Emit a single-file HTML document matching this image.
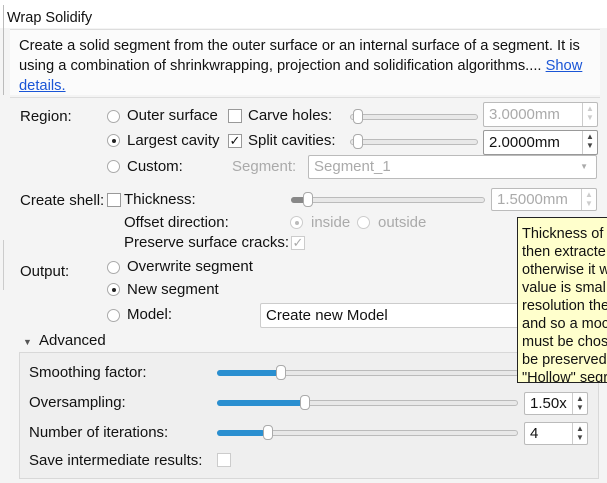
<!DOCTYPE html>
<html><head><style>
body{margin:0;width:607px;height:483px;background:#f4f4f4;font-family:"Liberation Sans",Arial,sans-serif;font-size:15px;color:#111;position:relative;overflow:hidden}
.a{position:absolute;white-space:nowrap;line-height:18px}
.top{position:absolute;left:0;top:0;width:607px;height:28px;background:#fff}
.dis{color:#aaa}
.rad{position:absolute;width:13px;height:13px;border:1px solid #aaa;border-radius:50%;background:#fff;box-sizing:border-box}
.rad.on::after{content:"";position:absolute;left:3.5px;top:3.5px;width:4px;height:4px;border-radius:50%;background:#222}
.rad.dis.on::after{background:#bbb}
.cb{position:absolute;width:14px;height:14px;border:1px solid #999;background:#fff;box-sizing:border-box;font-size:13px;line-height:12px;text-align:center}
.sl{position:absolute;height:4px;border:1px solid #bbb;border-radius:3px;background:#e8e8e8}
.fill{position:absolute;height:6px;border-radius:3px;background:#2a8fd0}
.h{position:absolute;width:10px;height:15px;border:1px solid #aaa;border-radius:4px;background:#fff;box-sizing:border-box}
.sp{position:absolute;border:1px solid #bbb;background:#fff;box-sizing:border-box;border-radius:2px;padding-left:5px;font-size:15px}
.arr{position:absolute;right:0;top:0;bottom:0;width:15px;border-left:1px solid #ccc;font-size:8px;text-align:center;line-height:9px;color:#444;padding-top:1px;box-sizing:border-box}
</style></head><body>
<div class="top"></div>
<div class="a" style="left:3px;top:5px;width:1px;height:90px;background:#bbb"></div>
<div class="a" style="left:3px;top:240px;width:1px;height:50px;background:#ccc"></div>
<div class="a" style="left:7px;top:9px;font-size:14.5px">Wrap Solidify</div>
<div class="a" style="left:10px;top:29px;width:590px;height:65px;background:#fbfbfb;border-top:1px solid #ddd"></div>
<div class="a" style="left:19px;top:36px;font-size:14.7px;line-height:20px">Create a solid segment from the outer surface or an internal surface of a segment. It is<br>using a combination of shrinkwrapping, projection and solidification algorithms.... <u style="color:#1a55d6">Show</u><br><u style="color:#1a55d6">details.</u></div>
<div class="a" style="left:10px;top:97px;width:590px;height:240px;border-top:1px solid #ddd"></div>

<div class="a" style="left:20px;top:108px">Region:</div>
<div class="rad" style="left:107px;top:110px"></div><div class="a" style="left:127px;top:107px">Outer surface</div>
<div class="cb" style="left:228px;top:109px"></div><div class="a" style="left:248px;top:107px">Carve holes:</div>
<div class="sl" style="left:350px;top:114px;width:126px"></div><div class="h" style="left:353px;top:109px"></div>
<div class="sp dis" style="left:483px;top:102px;width:115px;height:25px;line-height:23px">3.0000mm<div class="arr" style="color:#ccc">▲<br>▼</div></div>

<div class="rad on" style="left:107px;top:134px"></div><div class="a" style="left:127px;top:132px">Largest cavity</div>
<div class="cb" style="left:228px;top:134px">✓</div><div class="a" style="left:248px;top:132px">Split cavities:</div>
<div class="sl" style="left:350px;top:139px;width:126px"></div><div class="h" style="left:353px;top:134px"></div>
<div class="sp" style="left:483px;top:130px;width:115px;height:25px;line-height:23px;border-color:#999">2.0000mm<div class="arr">▲<br>▼</div></div>

<div class="rad" style="left:107px;top:160px"></div><div class="a" style="left:127px;top:158px">Custom:</div>
<div class="a dis" style="left:232px;top:158px">Segment:</div>
<div class="sp dis" style="left:308px;top:155px;width:289px;height:24px;line-height:22px">Segment_1<span style="position:absolute;right:8px;font-size:8px">▼</span></div>

<div class="a" style="left:20px;top:192px">Create shell:</div>
<div class="cb" style="left:107px;top:193px"></div><div class="a" style="left:124px;top:191px">Thickness:</div>
<div class="sl" style="left:291px;top:197px;width:192px"></div><div class="fill" style="left:291px;top:197px;width:16px;background:#888"></div><div class="h" style="left:303px;top:192px"></div>
<div class="sp dis" style="left:491px;top:188px;width:106px;height:23px;line-height:21px">1.5000mm<div class="arr" style="color:#ccc">▲<br>▼</div></div>

<div class="a" style="left:124px;top:214px">Offset direction:</div>
<div class="rad dis on" style="left:290px;top:216px;border-color:#ccc"></div><div class="a dis" style="left:311px;top:214px">inside</div>
<div class="rad" style="left:357px;top:216px;border-color:#ccc"></div><div class="a dis" style="left:378px;top:214px">outside</div>
<div class="a" style="left:124px;top:234px">Preserve surface cracks:</div>
<div class="cb dis" style="left:291px;top:236px;border-color:#ccc">✓</div>

<div class="a" style="left:20px;top:263px">Output:</div>
<div class="rad" style="left:107px;top:261px"></div><div class="a" style="left:127px;top:258px">Overwrite segment</div>
<div class="rad on" style="left:107px;top:283px"></div><div class="a" style="left:127px;top:281px">New segment</div>
<div class="rad" style="left:107px;top:309px"></div><div class="a" style="left:127px;top:306px">Model:</div>
<div class="sp" style="left:260px;top:303px;width:300px;height:25px;line-height:23px;border-color:#ccc">Create new Model</div>

<div class="a" style="left:23px;top:333px;font-size:9px;color:#555">▼</div><div class="a" style="left:39px;top:332px">Advanced</div>
<div class="a" style="left:19px;top:352px;width:578px;height:125px;border:1px solid #d8d8d8;background:#efefef"></div>

<div class="a" style="left:29px;top:364px">Smoothing factor:</div>
<div class="sl" style="left:217px;top:370px;width:300px"></div><div class="fill" style="left:217px;top:370px;width:62px"></div><div class="h" style="left:276px;top:365px"></div>
<div class="a" style="left:29px;top:394px">Oversampling:</div>
<div class="sl" style="left:217px;top:400px;width:299px"></div><div class="fill" style="left:217px;top:400px;width:86px"></div><div class="h" style="left:300px;top:395px"></div>
<div class="sp" style="left:524px;top:392px;width:64px;height:23px;line-height:21px">1.50x<div class="arr">▲<br>▼</div></div>
<div class="a" style="left:29px;top:424px">Number of iterations:</div>
<div class="sl" style="left:217px;top:430px;width:299px"></div><div class="fill" style="left:217px;top:430px;width:48px"></div><div class="h" style="left:263px;top:425px"></div>
<div class="sp" style="left:524px;top:422px;width:64px;height:23px;line-height:21px">4<div class="arr">▲<br>▼</div></div>
<div class="a" style="left:29px;top:452px">Save intermediate results:</div>
<div class="cb" style="left:217px;top:453px;border-color:#ccc"></div>

<div class="a" style="left:517px;top:217px;width:100px;height:166px;background:#ffffcc;border:1px solid #222;box-sizing:border-box;padding:7px 0 0 4px;font-size:14.5px;line-height:18px;overflow:hidden">Thickness of<br>then extracte<br>otherwise it w<br>value is smal<br>resolution the<br>and so a moc<br>must be chos<br>be preserved<br>"Hollow" segr</div>
</body></html>
